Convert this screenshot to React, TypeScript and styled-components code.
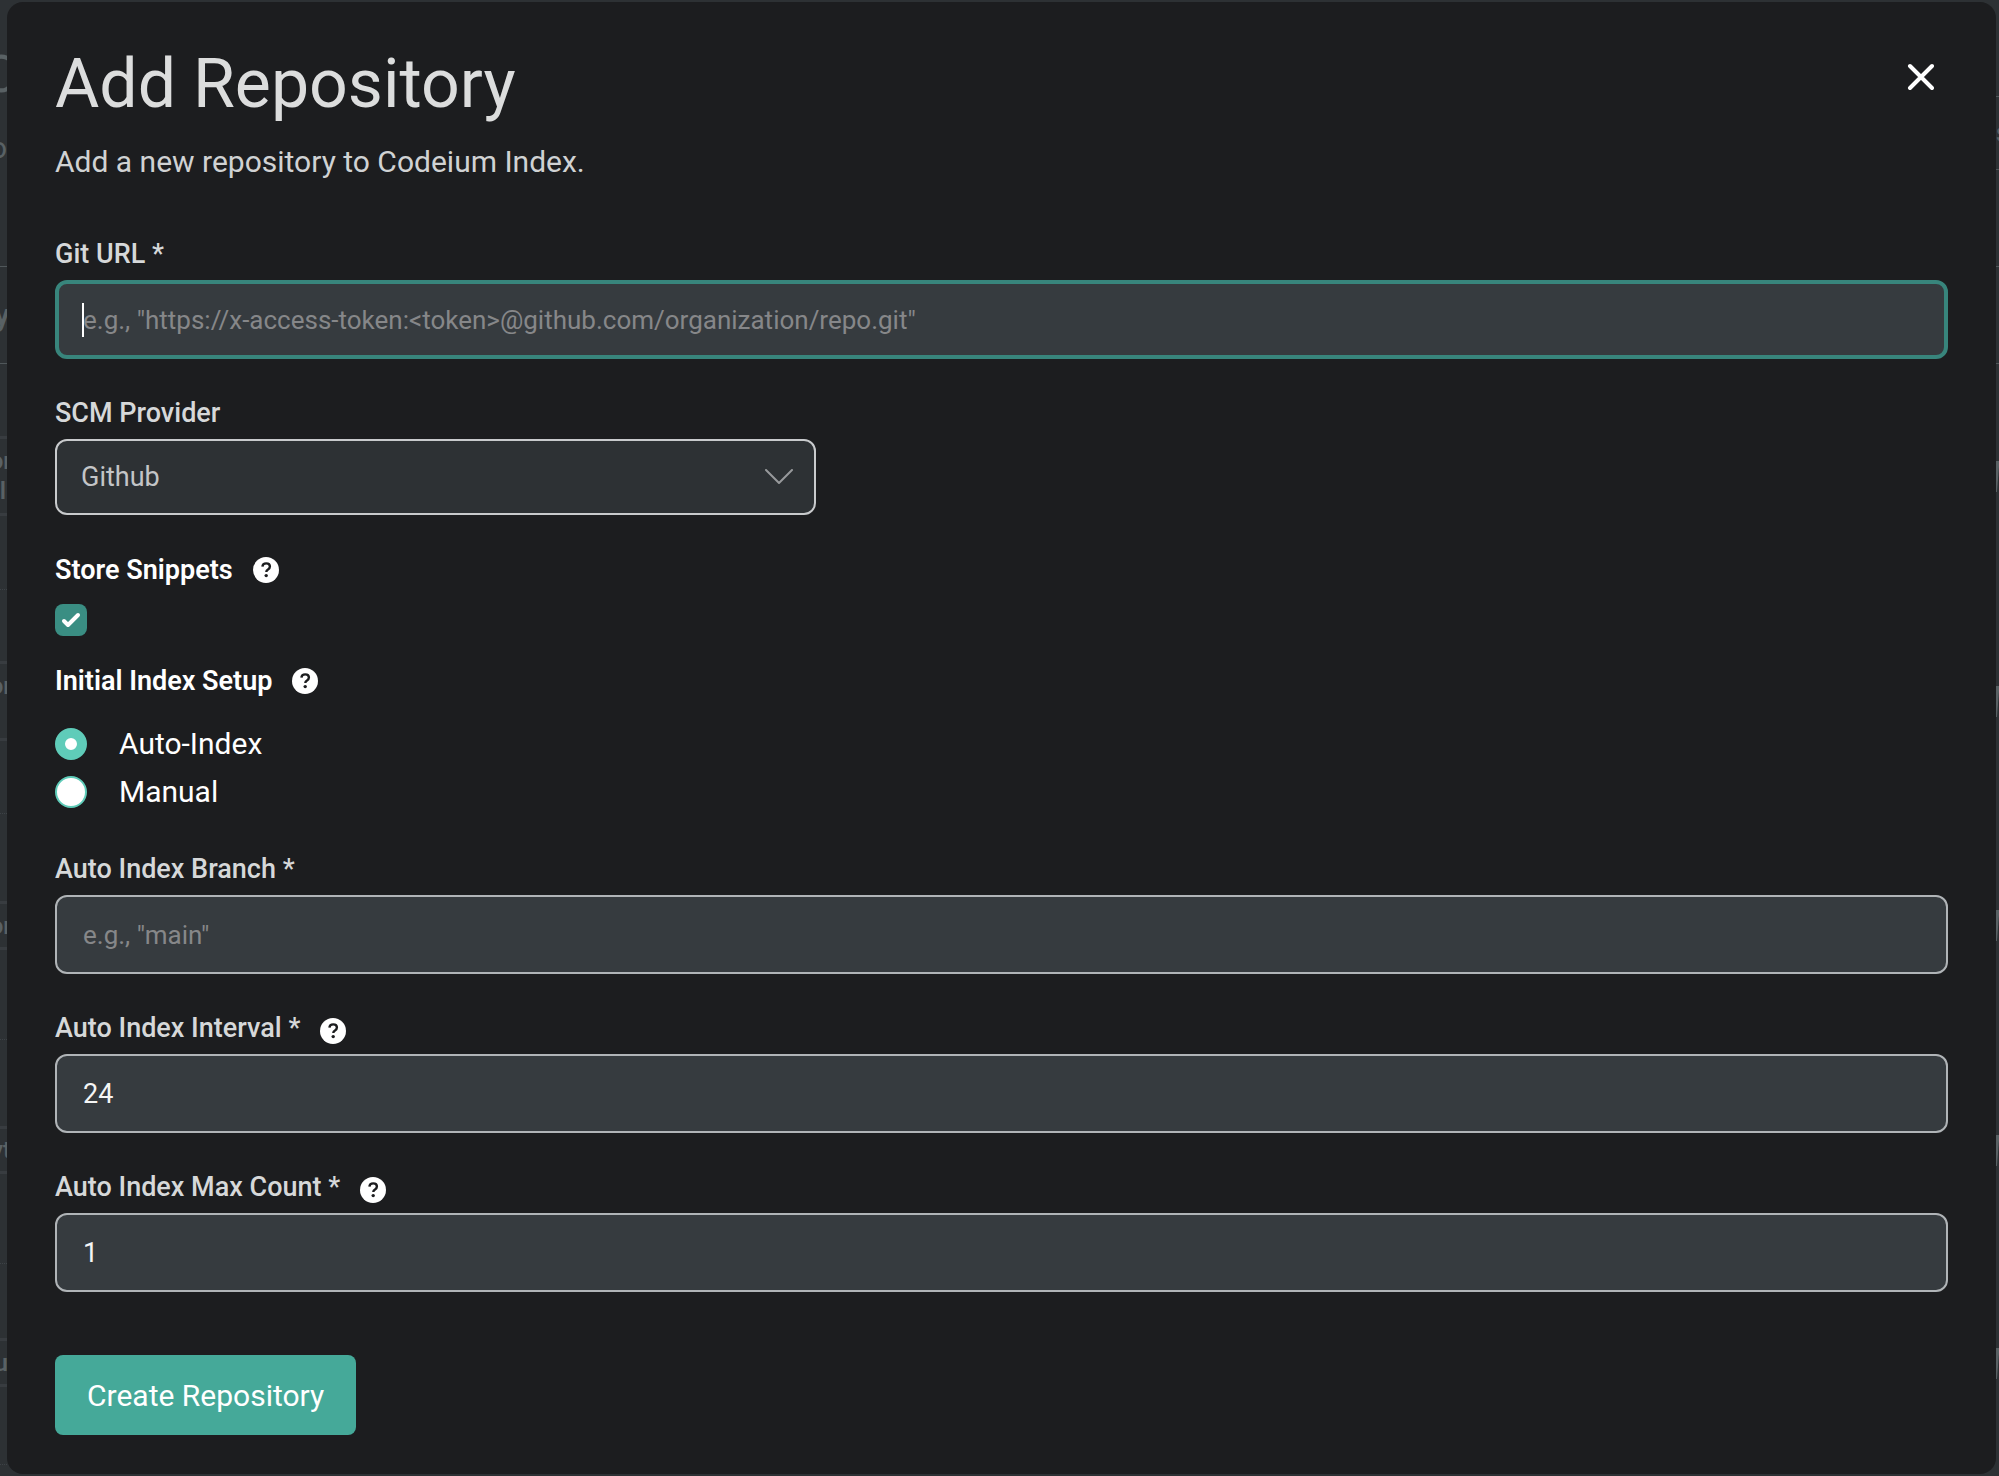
import React, { useState } from 'react';
import styled, { createGlobalStyle, css } from 'styled-components';

const GlobalStyle = createGlobalStyle`
  *, *::before, *::after { box-sizing: border-box; }
  html, body { margin: 0; background: #2d3134; }
  body, button, input, select {
    font-family: Roboto, "Liberation Sans", sans-serif;
  }
`;

const Screen = styled.div`
  display: grid;
  grid-template-columns: 7px minmax(0, 1fr) 3px;
  min-height: 100vh;
  background: #2d3134;
`;

/* Edge of the repository list that stays visible beside the dialog. */
const Sliver = styled.div`
  display: flex;
  flex-direction: column;
  overflow: hidden;
  color: #596164;
`;

type Rule = 'none' | 'thin' | 'thick' | 'dotted';

const rules: Record<Rule, string> = {
  none: '0 none',
  thin: '1px solid #50575a',
  thick: '3px solid #383c40',
  dotted: '1px dotted #3d4246',
};

const SliverRow = styled.div<{ $height: number; $size?: number; $rule?: Rule; $bold?: boolean; $hang?: number }>`
  display: flex;
  flex: none;
  flex-direction: column;
  justify-content: center;
  align-items: flex-end;
  height: ${(p) => p.$height}px;
  margin-right: -${(p) => p.$hang ?? 0}px;
  border-bottom: ${(p) => rules[p.$rule ?? 'none']};
  font-size: ${(p) => p.$size ?? 24}px;
  font-weight: ${(p) => (p.$bold ? 600 : 400)};
  line-height: 30px;
  white-space: nowrap;
`;

const Wedge = styled.svg`
  display: block;
  flex: none;
`;

const Dialog = styled.section`
  margin: 2px 0;
  padding: 42px 48px 38px;
  border-radius: 16px;
  background: #1c1d1f;
  color: #fff;
`;

const Header = styled.header`
  display: flex;
  justify-content: space-between;
  align-items: flex-start;
`;

const Title = styled.h1`
  margin: 0;
  font-size: 68px;
  font-weight: 400;
  line-height: 80px;
  color: #dcdddd;
`;

const Subtitle = styled.p`
  margin: 18px 0 56px;
  font-size: 30px;
  line-height: 40px;
  color: #d0d2d3;
`;

const CloseButton = styled.button`
  display: flex;
  align-items: center;
  justify-content: center;
  width: 56px;
  height: 56px;
  margin-top: 5px;
  padding: 0;
  border: 0;
  background: none;
  color: #fff;
`;

const Form = styled.form`
  display: flex;
  flex-direction: column;
  align-items: stretch;
`;

const Field = styled.div`
  display: flex;
  flex-direction: column;
  margin-bottom: 38px;
`;

const LabelRow = styled.div`
  display: flex;
  align-items: flex-end;
  gap: 20px;
  height: 42px;
  padding-bottom: 10px;
`;

const labelText = css`
  font-size: 27px;
  line-height: 32px;
`;

const Label = styled.label`
  ${labelText}
  font-weight: 500;
  color: #d6d8d9;
`;

const Heading = styled.span`
  ${labelText}
  font-weight: 600;
`;

const HelpButton = styled.button`
  display: flex;
  padding: 0;
  border: 0;
  background: none;
`;

const control = css`
  width: 100%;
  border: 2px solid #b0b4b7;
  border-radius: 12px;
  font-size: 27px;
  outline: none;
`;

const InputBox = styled.div`
  position: relative;
  display: flex;
`;

const Caret = styled.span`
  position: absolute;
  top: 50%;
  left: 27px;
  width: 2px;
  height: 34px;
  margin-top: -17px;
  background: #fff;
  pointer-events: none;
`;

const TextInput = styled.input`
  ${control}
  height: 79px;
  padding: 0 26px;
  background: #363b3f;
  color: #f4f5f5;
  &::placeholder { color: #868789; opacity: 1; }
  &:placeholder-shown { font-size: 26px; }
  &:focus {
    padding: 0 24px;
    border: 4px solid #38857c;
    caret-color: #fff;
  }
  &:focus:placeholder-shown { caret-color: transparent; }
`;

const SelectBox = styled.div`
  display: grid;
  align-items: center;
  width: calc(40% + 4px);
  min-width: 320px;
  & > * { grid-area: 1 / 1; }
  & > svg { justify-self: end; margin-right: 23px; pointer-events: none; }
`;

const Select = styled.select`
  ${control}
  height: 76px;
  padding: 0 72px 0 24px;
  appearance: none;
  border-color: #c8cacc;
  background: #2d3134;
  color: #c3c5c7;
`;

const Group = styled.fieldset`
  display: flex;
  flex-direction: column;
  margin: 0;
  padding: 0;
  border: 0;
`;

const GroupHead = styled.div`
  display: flex;
  align-items: center;
  gap: 20px;
  height: 34px;
`;

const CheckWrap = styled.span`
  display: grid;
  place-items: center;
  width: 32px;
  height: 32px;
  margin: 17px 0 28px;
  & > * { grid-area: 1 / 1; }
  & > svg { pointer-events: none; }
`;

const Checkbox = styled.input`
  width: 32px;
  height: 32px;
  margin: 0;
  appearance: none;
  border-radius: 8px;
  background: #2d3134;
  &:checked { background: #3a8e83; }
`;

const RadioList = styled.div`
  display: flex;
  flex-direction: column;
  gap: 8px;
  margin: 26px 0 41px;
`;

const RadioLabel = styled.label`
  display: flex;
  align-items: center;
  gap: 32px;
  font-size: 30px;
  line-height: 40px;
`;

const Radio = styled.input`
  width: 32px;
  height: 32px;
  margin: 0;
  appearance: none;
  border: 2px solid #5fccb9;
  border-radius: 50%;
  background: #fff;
  &:checked { border-width: 10px; }
`;

const Submit = styled.button`
  align-self: flex-start;
  height: 80px;
  margin-top: 25px;
  padding: 0 32px;
  border: 0;
  border-radius: 8px;
  background: #45a999;
  color: #fff;
  font-size: 30px;
`;

const HelpIcon = () => (
  <svg width="26" height="26" viewBox="0 0 26 26" fill="none" aria-hidden="true">
    <circle cx="13" cy="13" r="13" fill="#fff" />
    <path d="M9.4 9.6c.2-2 1.700-3.200 3.800-3.200 2.200 0 3.700 1.200 3.700 3.100 0 1.400-.7 2.200-1.900 3-1.200.7-1.700 1.200-1.700 2.500" stroke="#1c1d1f" strokeWidth="2.400" />
    <circle cx="13.200" cy="18.600" r="1.700" fill="#1c1d1f" />
  </svg>
);

const Help = ({ topic }: { topic: string }) => (
  <HelpButton type="button" aria-label={`Help: ${topic}`}>
    <HelpIcon />
  </HelpButton>
);

type TextFieldProps = {
  id: string;
  label: string;
  placeholder?: string;
  initial?: string;
  help?: boolean;
  autoFocus?: boolean;
};

const TextField = ({ id, label, placeholder, initial = '', help, autoFocus = false }: TextFieldProps) => {
  const [value, setValue] = useState(initial);
  const [focused, setFocused] = useState(autoFocus);
  return (
    <Field>
      <LabelRow>
        <Label htmlFor={id}>{label} *</Label>
        {help && <Help topic={label} />}
      </LabelRow>
      <InputBox>
        <TextInput
          id={id}
          value={value}
          placeholder={placeholder}
          autoFocus={autoFocus}
          onFocus={() => setFocused(true)}
          onBlur={() => setFocused(false)}
          onChange={(e) => setValue(e.target.value)}
        />
        {focused && value === '' && <Caret />}
      </InputBox>
    </Field>
  );
};

const rowEdges = [97, 194, 193, 194, 182];

export default function App() {
  const [store, setStore] = useState(true);
  const [mode, setMode] = useState('auto');
  return (
    <>
      <GlobalStyle />
      <Screen>
        <Sliver aria-hidden="true">
          <SliverRow $height={38} />
          <SliverRow $height={74} $size={52} $hang={12}>O</SliverRow>
          <SliverRow $height={72} $size={30}>o</SliverRow>
          <SliverRow $height={83} $rule="thin" />
          <SliverRow $height={97} $rule="thin" $size={32} $bold $hang={3}>y</SliverRow>
          <SliverRow $height={75} $rule="thick" />
          <SliverRow $height={77} $rule="thick" $bold $hang={5}>
            <span>or</span>
            <span>l&nbsp;</span>
          </SliverRow>
          <SliverRow $height={74} $rule="dotted" />
          <SliverRow $height={74} $rule="thick" />
          <SliverRow $height={77} $rule="thick" $bold $hang={5}>
            <span>or</span>
            <span>&nbsp;</span>
          </SliverRow>
          <SliverRow $height={73} $rule="dotted" />
          <SliverRow $height={90} $rule="thick" />
          <SliverRow $height={46} $rule="thick" $bold $hang={5}>or</SliverRow>
          <SliverRow $height={90} $rule="dotted" />
          <SliverRow $height={89} $rule="thick" />
          <SliverRow $height={45} $rule="thick" $bold $hang={4}>yt</SliverRow>
          <SliverRow $height={90} $rule="dotted" />
          <SliverRow $height={77} $rule="thick" />
          <SliverRow $height={46} $rule="thick" $bold $hang={1}>u</SliverRow>
          <SliverRow $height={78} $rule="dotted" />
        </Sliver>
        <Dialog role="dialog" aria-labelledby="dialog-title">
          <Header>
            <div>
              <Title id="dialog-title">Add Repository</Title>
              <Subtitle>Add a new repository to Codeium Index.</Subtitle>
            </div>
            <CloseButton type="button" aria-label="Close">
              <svg width="28" height="28" viewBox="0 0 28 28" stroke="currentColor" strokeWidth="4" strokeLinecap="round" aria-hidden="true">
                <path d="M4 3 26 25M26 3 4 25" />
              </svg>
            </CloseButton>
          </Header>
          <Form onSubmit={(e) => e.preventDefault()}>
            <TextField
              id="git-url"
              label="Git URL"
              placeholder={'e.g., "https://x-access-token:<token>@github.com/organization/repo.git"'}
              autoFocus
            />
            <Field>
              <LabelRow>
                <Label htmlFor="scm">SCM Provider</Label>
              </LabelRow>
              <SelectBox>
                <Select id="scm" defaultValue="Github">
                  <option>Github</option>
                </Select>
                <svg width="28" height="16" viewBox="0 0 28 16" fill="none" stroke="#97999b" strokeWidth="2" strokeLinecap="round" strokeLinejoin="round" aria-hidden="true">
                  <path d="M1 1 14 14 27 1" />
                </svg>
              </SelectBox>
            </Field>
            <Group>
              <GroupHead>
                <Heading as="label" htmlFor="store">Store Snippets</Heading>
                <Help topic="Store Snippets" />
              </GroupHead>
              <CheckWrap>
                <Checkbox id="store" type="checkbox" checked={store} onChange={(e) => setStore(e.target.checked)} />
                {store && (
                  <svg width="20" height="18" viewBox="0 0 20 18" fill="none" stroke="#fff" strokeWidth="4" strokeLinecap="round" strokeLinejoin="round" aria-hidden="true">
                    <path d="M3 10 7 14 17 4" />
                  </svg>
                )}
              </CheckWrap>
            </Group>
            <Group role="radiogroup" aria-labelledby="setup-heading">
              <GroupHead>
                <Heading id="setup-heading">Initial Index Setup</Heading>
                <Help topic="Initial Index Setup" />
              </GroupHead>
              <RadioList>
                <RadioLabel>
                  <Radio type="radio" name="setup" checked={mode === 'auto'} onChange={() => setMode('auto')} />
                  Auto-Index
                </RadioLabel>
                <RadioLabel>
                  <Radio type="radio" name="setup" checked={mode === 'manual'} onChange={() => setMode('manual')} />
                  Manual
                </RadioLabel>
              </RadioList>
            </Group>
            <TextField id="branch" label="Auto Index Branch" placeholder={'e.g., "main"'} />
            <TextField id="interval" label="Auto Index Interval" initial="24" help />
            <TextField id="max-count" label="Auto Index Max Count" initial="1" help />
            <Submit type="submit">Create Repository</Submit>
          </Form>
        </Dialog>
        <Sliver aria-hidden="true">
          <SliverRow $height={97} $rule="thin" />
          <SliverRow $height={73} $rule="thin" $size={28} $hang={11}>s</SliverRow>
          <SliverRow $height={97} $rule="thin" />
          <SliverRow $height={97} $rule="thin" />
          {rowEdges.map((height, i) => (
            <React.Fragment key={i}>
              <SliverRow $height={height} />
              <Wedge width="3" height="31" viewBox="0 0 3 31">
                <path d="M0 0H3V5L1 31H0Z" fill="#596164" />
              </Wedge>
            </React.Fragment>
          ))}
        </Sliver>
      </Screen>
    </>
  );
}
